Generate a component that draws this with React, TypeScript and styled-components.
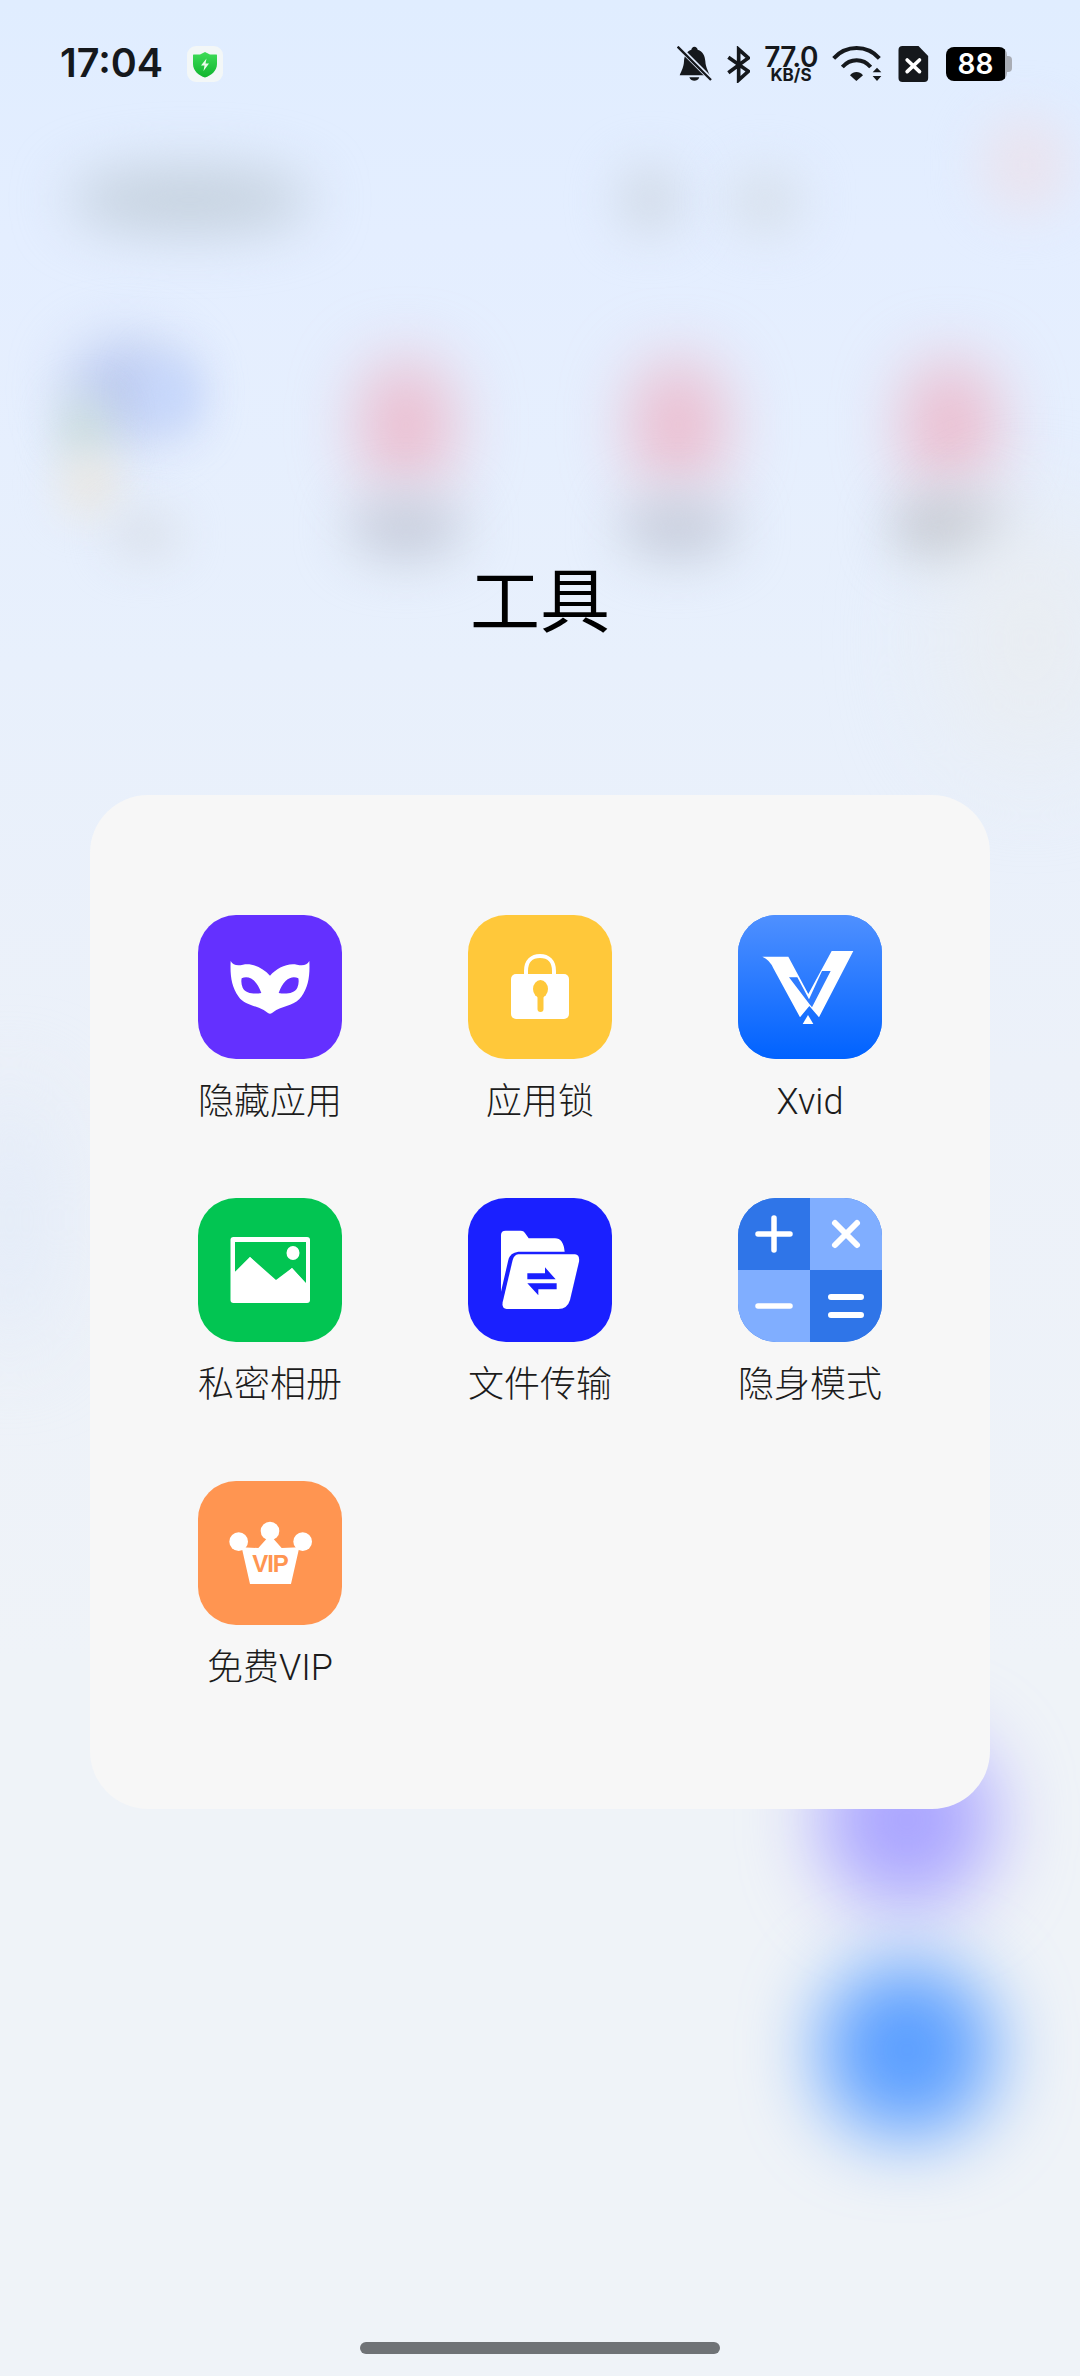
import React from "react";
import styled, { createGlobalStyle } from "styled-components";

const GlobalStyle = createGlobalStyle`
  html, body {
    margin: 0;
    padding: 0;
    background: #eff3f8;
  }
`;

const Screen = styled.div`
  position: relative;
  width: 1080px;
  height: 2376px;
  overflow: hidden;
  display: flex;
  flex-direction: column;
  background: linear-gradient(180deg, #e0edff 0%, #e4eeff 10%, #e8f0fc 28%, #ecf1f9 45%, #eff3f8 70%);
  font-family: Roboto, "Noto Sans CJK SC", sans-serif;
`;

const Backdrop = styled.div`
  position: absolute;
  inset: 0;
  pointer-events: none;
`;

const Blob = styled.div<{ $x: number; $y: number; $w: number; $h: number; $color: string; $blur: number }>`
  position: absolute;
  left: ${(p) => p.$x - p.$w / 2}px;
  top: ${(p) => p.$y - p.$h / 2}px;
  width: ${(p) => p.$w}px;
  height: ${(p) => p.$h}px;
  border-radius: 45%;
  background: ${(p) => p.$color};
  filter: blur(${(p) => p.$blur}px);
`;

const blobs = [
  { x: 190, y: 200, w: 240, h: 64, color: "#c4d0dd", blur: 28 },
  { x: 650, y: 200, w: 64, h: 70, color: "#d2dbe8", blur: 24 },
  { x: 765, y: 202, w: 76, h: 66, color: "#d8e1ed", blur: 24 },
  { x: 1025, y: 165, w: 90, h: 100, color: "#e9e4f0", blur: 24 },
  { x: 125, y: 390, w: 110, h: 96, color: "#bccaf0", blur: 28 },
  { x: 172, y: 395, w: 56, h: 70, color: "#c4d6fc", blur: 22 },
  { x: 85, y: 430, w: 44, h: 66, color: "#c9dcd8", blur: 22 },
  { x: 90, y: 485, w: 56, h: 60, color: "#ebe7e0", blur: 22 },
  { x: 145, y: 535, w: 66, h: 46, color: "#dae0ea", blur: 22 },
  { x: 406, y: 425, w: 92, h: 128, color: "#ecbacc", blur: 33 },
  { x: 678, y: 425, w: 92, h: 128, color: "#ecbacc", blur: 33 },
  { x: 950, y: 425, w: 92, h: 128, color: "#ecbacc", blur: 33 },
  { x: 406, y: 528, w: 112, h: 60, color: "#c6ccda", blur: 26 },
  { x: 678, y: 528, w: 112, h: 60, color: "#c6ccda", blur: 26 },
  { x: 950, y: 528, w: 112, h: 60, color: "#bec2ca", blur: 26 },
  { x: 1030, y: 640, w: 180, h: 260, color: "#e9edf2", blur: 50 },
  { x: 10, y: 1220, w: 90, h: 260, color: "#e3ebf8", blur: 44 },
  { x: 907, y: 1820, w: 172, h: 172, color: "#aaa5ff", blur: 38 },
  { x: 907, y: 2050, w: 172, h: 172, color: "#5a9eff", blur: 38 },
];

const StatusBar = styled.div`
  position: relative;
  height: 130px;
  padding: 0 68px 2px 60px;
  box-sizing: border-box;
  display: flex;
  align-items: center;
`;

const Time = styled.span`
  font-family: Inter, sans-serif;
  font-size: 39.5px;
  font-weight: 600;
  line-height: 1;
  color: #15181c;
  margin-right: 24px;
`;

const ShieldTile = styled.div`
  width: 36px;
  height: 36px;
  border-radius: 9px;
  background: #f3f7f7;
  display: flex;
  align-items: center;
  justify-content: center;
`;

const StatusIcons = styled.div`
  margin-left: auto;
  display: flex;
  align-items: center;
  gap: 13px;
`;

const NetSpeed = styled.div`
  width: 56px;
  display: flex;
  flex-direction: column;
  align-items: center;
  color: #15181c;
  font-family: Inter, sans-serif;
  font-weight: 600;
`;

const NetValue = styled.span`
  font-size: 28px;
  line-height: 22px;
  letter-spacing: -0.6px;
`;

const NetUnit = styled.span`
  font-size: 17px;
  line-height: 15px;
  font-weight: 700;
`;

const Battery = styled.div`
  position: relative;
  margin-left: 4px;
  margin-right: 5px;
  width: 61px;
  height: 34px;
  border-radius: 8px;
  background: linear-gradient(90deg, #000 97%, #a9adb5 97%);
  color: #fff;
  font-family: Inter, sans-serif;
  font-size: 28px;
  font-weight: 600;
  display: flex;
  align-items: center;
  justify-content: center;
  padding-right: 2px;
  box-sizing: border-box;

  &::after {
    content: "";
    position: absolute;
    right: -5px;
    top: 9px;
    width: 5px;
    height: 16px;
    border-radius: 0 4px 4px 0;
    background: #a9adb5;
  }
`;

const Title = styled.h1`
  position: relative;
  margin: 427px 0 0;
  font-size: 70px;
  font-weight: 400;
  line-height: 80px;
  text-align: center;
  color: #000;
  font-family: "Noto Sans CJK SC", sans-serif;
`;

const Folder = styled.div`
  position: relative;
  margin: 158px 0 0 90px;
  width: 900px;
  height: 1014px;
  box-sizing: border-box;
  padding: 120px 45px 0;
  border-radius: 58px;
  background: #f7f7f7;
  display: grid;
  grid-template-columns: repeat(3, 270px);
  grid-auto-rows: 212px;
  row-gap: 71px;
  align-content: start;
`;

const AppCell = styled.div`
  display: flex;
  flex-direction: column;
  align-items: center;
`;

const AppTile = styled.div<{ $bg: string }>`
  flex: none;
  width: 144px;
  height: 144px;
  border-radius: 38px;
  overflow: hidden;
  background: ${(p) => p.$bg};

  svg {
    display: block;
    width: 144px;
    height: 144px;
  }
`;

const AppLabel = styled.span`
  margin-top: 18px;
  font-size: 36px;
  font-weight: 300;
  line-height: 50px;
  color: #1c1c1c;
  white-space: nowrap;
`;

const HomeBar = styled.div`
  position: relative;
  margin: 533px auto 0;
  width: 360px;
  height: 12px;
  border-radius: 6px;
  background: #6f7276;
`;

const ShieldIcon = () => (
  <svg width="26" height="27" viewBox="0 0 26 27">
    <defs>
      <linearGradient id="shieldFill" x1="0" y1="0" x2="0" y2="1">
        <stop offset="0" stopColor="#3fdc58" />
        <stop offset="1" stopColor="#10b52e" />
      </linearGradient>
    </defs>
    <path
      d="M13 1 L18 3.5 L24.5 3.5 Q25 3.5 25 4.5 L25 13 C25 20 19 24.5 13 26.5 C7 24.5 1 20 1 13 L1 4.5 Q1 3.5 1.5 3.5 L8 3.5 Z"
      fill="url(#shieldFill)"
    />
    <path d="M14.5 7.5 L9 14.5 L12.5 14.5 L11.5 20 L17 12.5 L13.5 12.5 Z" fill="#eafbe9" />
  </svg>
);

const BellOffIcon = () => (
  <svg width="36" height="36" viewBox="110 78 108 108">
    <path
      d="M162 80 C168 80 171 84 172 89 C188 94 194 108 195 124 C196 142 203 152 208 166 L118 166 C124 152 130 142 131 124 C132 108 138 94 153 89 C154 84 157 80 162 80 Z"
      fill="#15181c"
    />
    <path d="M147 172 L177 172 C174 180 168 182 162 182 C156 182 150 180 147 172 Z" fill="#15181c" />
    <path d="M108 74 L216 182" stroke="#e2edff" strokeWidth="14" />
    <path d="M112 80 L212 180" stroke="#15181c" strokeWidth="7" />
  </svg>
);

const BluetoothIcon = () => (
  <svg width="24" height="37" viewBox="255 76 72 111">
    <path
      d="M262 110 L322 152 L293 178 L293 86 L322 112 L262 156"
      fill="none"
      stroke="#15181c"
      strokeWidth="11"
    />
  </svg>
);

const WifiIcon = () => (
  <svg width="53" height="36" viewBox="575 78 159 108">
    <path d="M580 115 C618 74 680 74 717 115" fill="none" stroke="#15181c" strokeWidth="12" />
    <path d="M606 141 C630 114 668 114 691 141" fill="none" stroke="#15181c" strokeWidth="12" />
    <path d="M629 166 C640 153 657 153 668 166 L648 183 Z" fill="#15181c" />
    <path d="M697 157 L723 157 L710 143 Z M697 168 L723 168 L710 183 Z" fill="#15181c" />
  </svg>
);

const SimIcon = () => (
  <svg width="31" height="36" viewBox="775 78 90 108">
    <path
      d="M787 78 L835 78 L864 108 L864 174 Q864 186 852 186 L787 186 Q775 186 775 174 L775 90 Q775 78 787 78 Z"
      fill="#15181c"
    />
    <path d="M801 120 L838 155 M838 120 L801 155" stroke="#fff" strokeWidth="11" strokeLinecap="round" />
  </svg>
);

const MaskIcon = () => (
  <svg viewBox="0 0 432 432">
    <path
      fill="#fff"
      fillRule="evenodd"
      d="M98 138 C105 150 116 153 135 149 C165 143 196 160 216 182 C236 160 267 143 297 149 C316 153 327 150 334 138 C336 180 332 215 310 245 C295 268 260 272 235 285 C225 292 220 296 216 296 C212 296 207 292 197 285 C172 272 137 268 122 245 C100 215 96 180 98 138 Z M131 190 C150 180 176 192 190 234 C170 238 142 236 134 218 C130 208 129 198 131 190 Z M301 190 C282 180 256 192 242 234 C262 238 290 236 298 218 C302 208 303 198 301 190 Z"
    />
  </svg>
);

const LockIcon = () => (
  <svg viewBox="0 0 144 144">
    <path d="M58 62 L58 56 C58 46 64 41 72 41 C80 41 86 46 86 56 L86 62" fill="none" stroke="#fff" strokeWidth="4" />
    <rect x="43" y="59" width="58" height="45" rx="5" fill="#fff" />
    <ellipse cx="72.5" cy="74" rx="7.5" ry="9" fill="#ffc83a" />
    <rect x="69.5" y="74" width="6" height="23" rx="3" fill="#ffc83a" />
  </svg>
);

const XvidIcon = () => (
  <svg viewBox="54 45 432 432">
    <defs>
      <linearGradient id="xvidFill" x1="0" y1="0" x2="0" y2="1">
        <stop offset="0" stopColor="#4f90ff" />
        <stop offset="1" stopColor="#0062ff" />
      </linearGradient>
    </defs>
    <rect x="54" y="45" width="432" height="432" fill="url(#xvidFill)" />
    <path
      fill="#fff"
      d="M127 170 L205 170 L265 282 L335 153 L400 153 L297 352 L268 318 L240 352 L160 205 Q150 180 127 170 Z"
    />
    <path
      fill="#2f7cff"
      d="M207 232 L232 232 L267 298 L306 213 L332 213 L276 322 L268 312 Z"
    />
    <path fill="#fff" d="M264 345 L280 372 L248 372 Z" />
  </svg>
);

const PhotoIcon = () => (
  <svg viewBox="0 0 144 144">
    <rect x="32.5" y="39" width="79.5" height="66" rx="3" fill="#fff" />
    <path d="M37 44 L108 44 L108 85 L94 70 L78 82 L52 59 L37 74 Z" fill="#02c552" />
    <path d="M37 74 L52 59 L78 86 L94 70 L108 86 L108 101 L37 101 Z" fill="#fff" />
    <ellipse cx="95" cy="55" rx="6.5" ry="7" fill="#fff" />
  </svg>
);

const TransferIcon = () => (
  <svg viewBox="54 39 432 432">
    <path
      fill="#fff"
      d="M153 150 Q153 137 167 137 L212 137 Q222 137 227 147 L236 160 L315 160 Q340 160 344 200 L205 200 Q180 203 175 225 L153 320 Z"
    />
    <path
      fill="#fff"
      d="M205 208 L375 208 Q390 210 387 230 L360 345 Q352 372 325 372 L170 372 Q155 372 158 352 L188 225 Q192 210 205 208 Z"
    />
    <path fill="#1a20ff" d="M232 265 L285 265 L285 247 L317 283 L232 283 Z" />
    <path fill="#1a20ff" d="M320 295 L320 313 L265 313 L265 331 L232 295 Z" />
  </svg>
);

const CalcIcon = () => (
  <svg viewBox="0 0 144 144">
    <rect x="0" y="0" width="72" height="72" fill="#2f75e8" />
    <rect x="72" y="0" width="72" height="72" fill="#80aeff" />
    <rect x="0" y="72" width="72" height="72" fill="#80aeff" />
    <rect x="72" y="72" width="72" height="72" fill="#2f75e8" />
    <g stroke="#fff" strokeLinecap="round" fill="none">
      <path d="M20 36 L52 36 M36 20 L36 52" strokeWidth="5.5" />
      <path d="M97 25 L119 47 M119 25 L97 47" strokeWidth="6" />
      <path d="M20 108 L52 108" strokeWidth="5.5" />
      <path d="M93 99 L123 99 M93 117 L123 117" strokeWidth="6" />
    </g>
  </svg>
);

const CrownIcon = () => (
  <svg viewBox="24 33 432 432">
    <g fill="#fff">
      <circle cx="146" cy="215" r="28" />
      <circle cx="240" cy="183" r="28" />
      <circle cx="338" cy="215" r="28" />
      <path d="M155 232 L205 234 L240 195 L275 234 L328 232 L303 342 L180 342 Z" />
    </g>
    <text
      x="240"
      y="306"
      textAnchor="middle"
      fontFamily="'Liberation Sans', sans-serif"
      fontWeight="700"
      fontSize="72"
      letterSpacing="-3"
      fill="#ff9551"
    >
      VIP
    </text>
  </svg>
);

const apps = [
  { name: "隐藏应用", bg: "#6430ff", icon: <MaskIcon /> },
  { name: "应用锁", bg: "#ffc83a", icon: <LockIcon /> },
  { name: "Xvid", bg: "#2f7cff", icon: <XvidIcon /> },
  { name: "私密相册", bg: "#02c552", icon: <PhotoIcon /> },
  { name: "文件传输", bg: "#1a20ff", icon: <TransferIcon /> },
  { name: "隐身模式", bg: "#2f75e8", icon: <CalcIcon /> },
  { name: "免费VIP", bg: "#ff9551", icon: <CrownIcon /> },
];

export default function App() {
  return (
    <Screen>
      <GlobalStyle />
      <Backdrop>
        {blobs.map((b, i) => (
          <Blob key={i} $x={b.x} $y={b.y} $w={b.w} $h={b.h} $color={b.color} $blur={b.blur} />
        ))}
      </Backdrop>
      <StatusBar>
        <Time>17:04</Time>
        <ShieldTile>
          <ShieldIcon />
        </ShieldTile>
        <StatusIcons>
          <BellOffIcon />
          <BluetoothIcon />
          <NetSpeed>
            <NetValue>77.0</NetValue>
            <NetUnit>KB/S</NetUnit>
          </NetSpeed>
          <WifiIcon />
          <SimIcon />
          <Battery>88</Battery>
        </StatusIcons>
      </StatusBar>
      <Title>工具</Title>
      <Folder>
        {apps.map((app) => (
          <AppCell key={app.name}>
            <AppTile $bg={app.bg}>{app.icon}</AppTile>
            <AppLabel>{app.name}</AppLabel>
          </AppCell>
        ))}
      </Folder>
      <HomeBar />
    </Screen>
  );
}
